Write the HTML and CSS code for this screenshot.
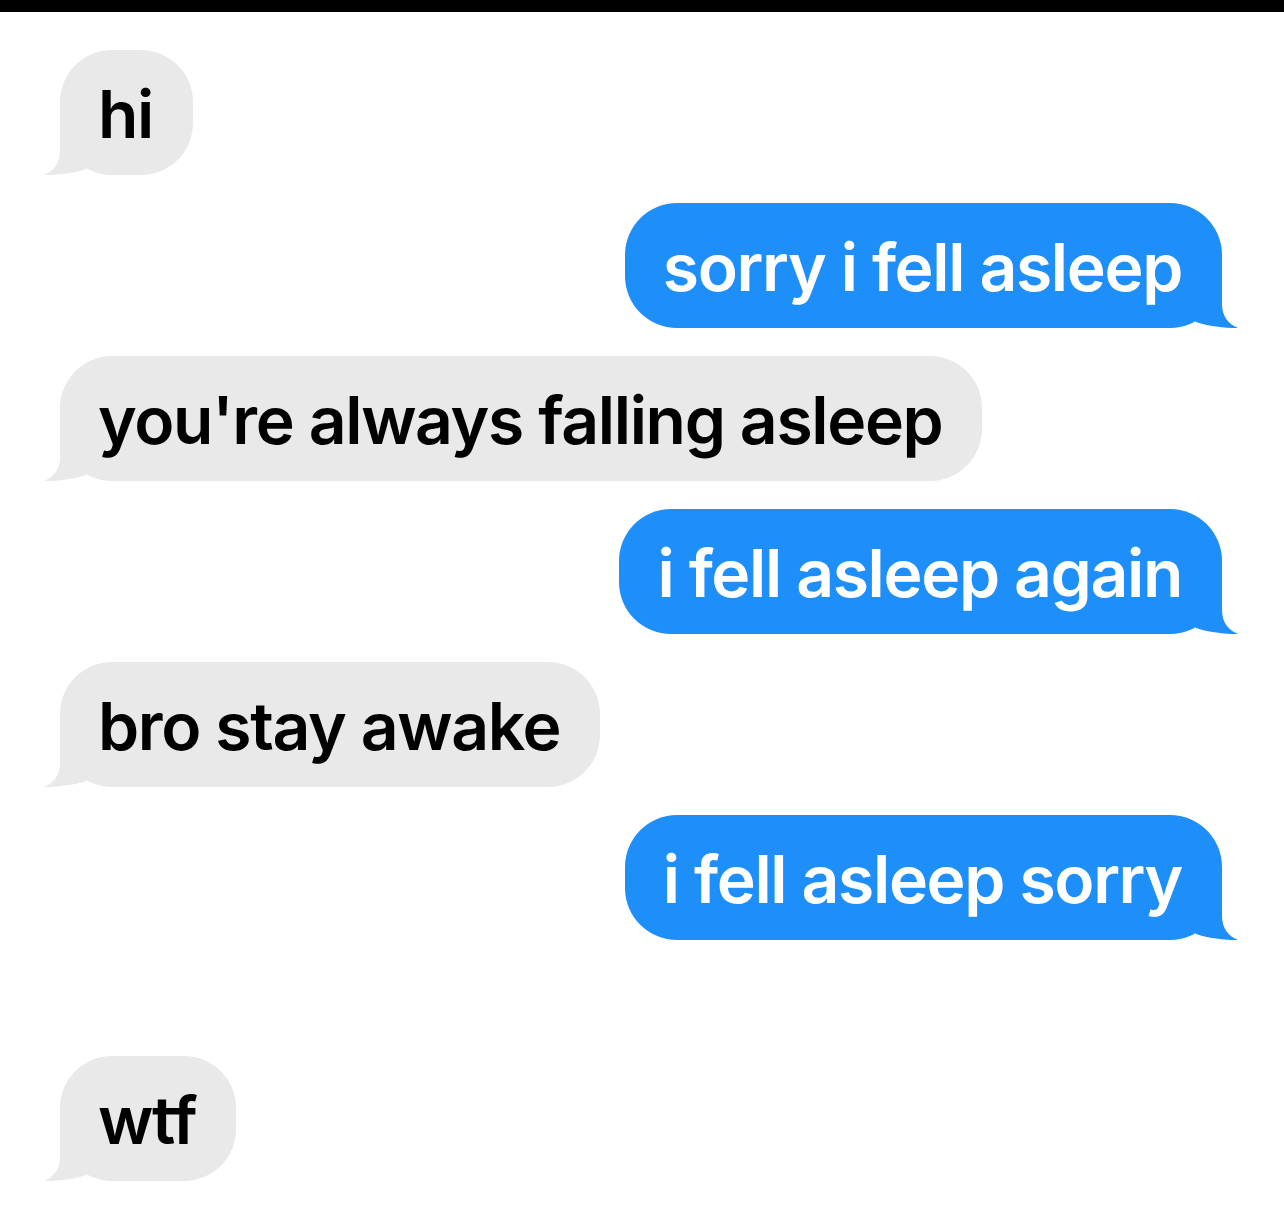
FILE: index.html
```html
<!DOCTYPE html>
<html>
<head>
<meta charset="utf-8">
<link rel="stylesheet" href="styles.css">
</head>
<body>
<div class="topbar"></div>
<main class="thread">
  <div class="msg in"><span class="txt">hi</span><svg class="tail" viewBox="0 0 44 50"><path d="M16 0 L16 26 C16 38 10 46 0 50 C14 50 30 48 42 44 L42 0 Z"/></svg></div>
  <div class="msg out"><span class="txt">sorry i fell asleep</span><svg class="tail" viewBox="0 0 44 50"><path d="M16 0 L16 26 C16 38 10 46 0 50 C14 50 30 48 42 44 L42 0 Z"/></svg></div>
  <div class="msg in"><span class="txt">you're always falling asleep</span><svg class="tail" viewBox="0 0 44 50"><path d="M16 0 L16 26 C16 38 10 46 0 50 C14 50 30 48 42 44 L42 0 Z"/></svg></div>
  <div class="msg out"><span class="txt">i fell asleep again</span><svg class="tail" viewBox="0 0 44 50"><path d="M16 0 L16 26 C16 38 10 46 0 50 C14 50 30 48 42 44 L42 0 Z"/></svg></div>
  <div class="msg in"><span class="txt">bro stay awake</span><svg class="tail" viewBox="0 0 44 50"><path d="M16 0 L16 26 C16 38 10 46 0 50 C14 50 30 48 42 44 L42 0 Z"/></svg></div>
  <div class="msg out"><span class="txt">i fell asleep sorry</span><svg class="tail" viewBox="0 0 44 50"><path d="M16 0 L16 26 C16 38 10 46 0 50 C14 50 30 48 42 44 L42 0 Z"/></svg></div>
  <div class="msg in late"><span class="txt">wtf</span><svg class="tail" viewBox="0 0 44 50"><path d="M16 0 L16 26 C16 38 10 46 0 50 C14 50 30 48 42 44 L42 0 Z"/></svg></div>
</main>
</body>
</html>
```
FILE: styles.css
```css
html, body {
  margin: 0;
  padding: 0;
  background: #ffffff;
}
body {
  width: 1284px;
  height: 1208px;
  overflow: hidden;
  font-family: Inter, "Liberation Sans", Arial, sans-serif;
}
.topbar {
  height: 12px;
  background: #000;
}
.thread {
  display: flex;
  flex-direction: column;
  gap: 28px;
  padding: 38px 62px 0 60px;
}
.msg {
  position: relative;
  border-radius: 52px;
  padding: 27px 40px 24px 38px;
  font-size: 66px;
  line-height: 74px;
  font-weight: 600;
  letter-spacing: -1.35px;
  white-space: nowrap;
}
.msg .txt { position: relative; z-index: 1; }
.in {
  align-self: flex-start;
  background: #e9e9e9;
  color: #000;
}
.out {
  align-self: flex-end;
  background: #1e8ef8;
  color: #fff;
}
.tail {
  position: absolute;
  bottom: 0;
  width: 44px;
  height: 50px;
}
.in .tail { left: -16px; fill: #e9e9e9; }
.out .tail { right: -16px; fill: #1e8ef8; transform: scaleX(-1); }
.late { margin-top: 88px; }
```
